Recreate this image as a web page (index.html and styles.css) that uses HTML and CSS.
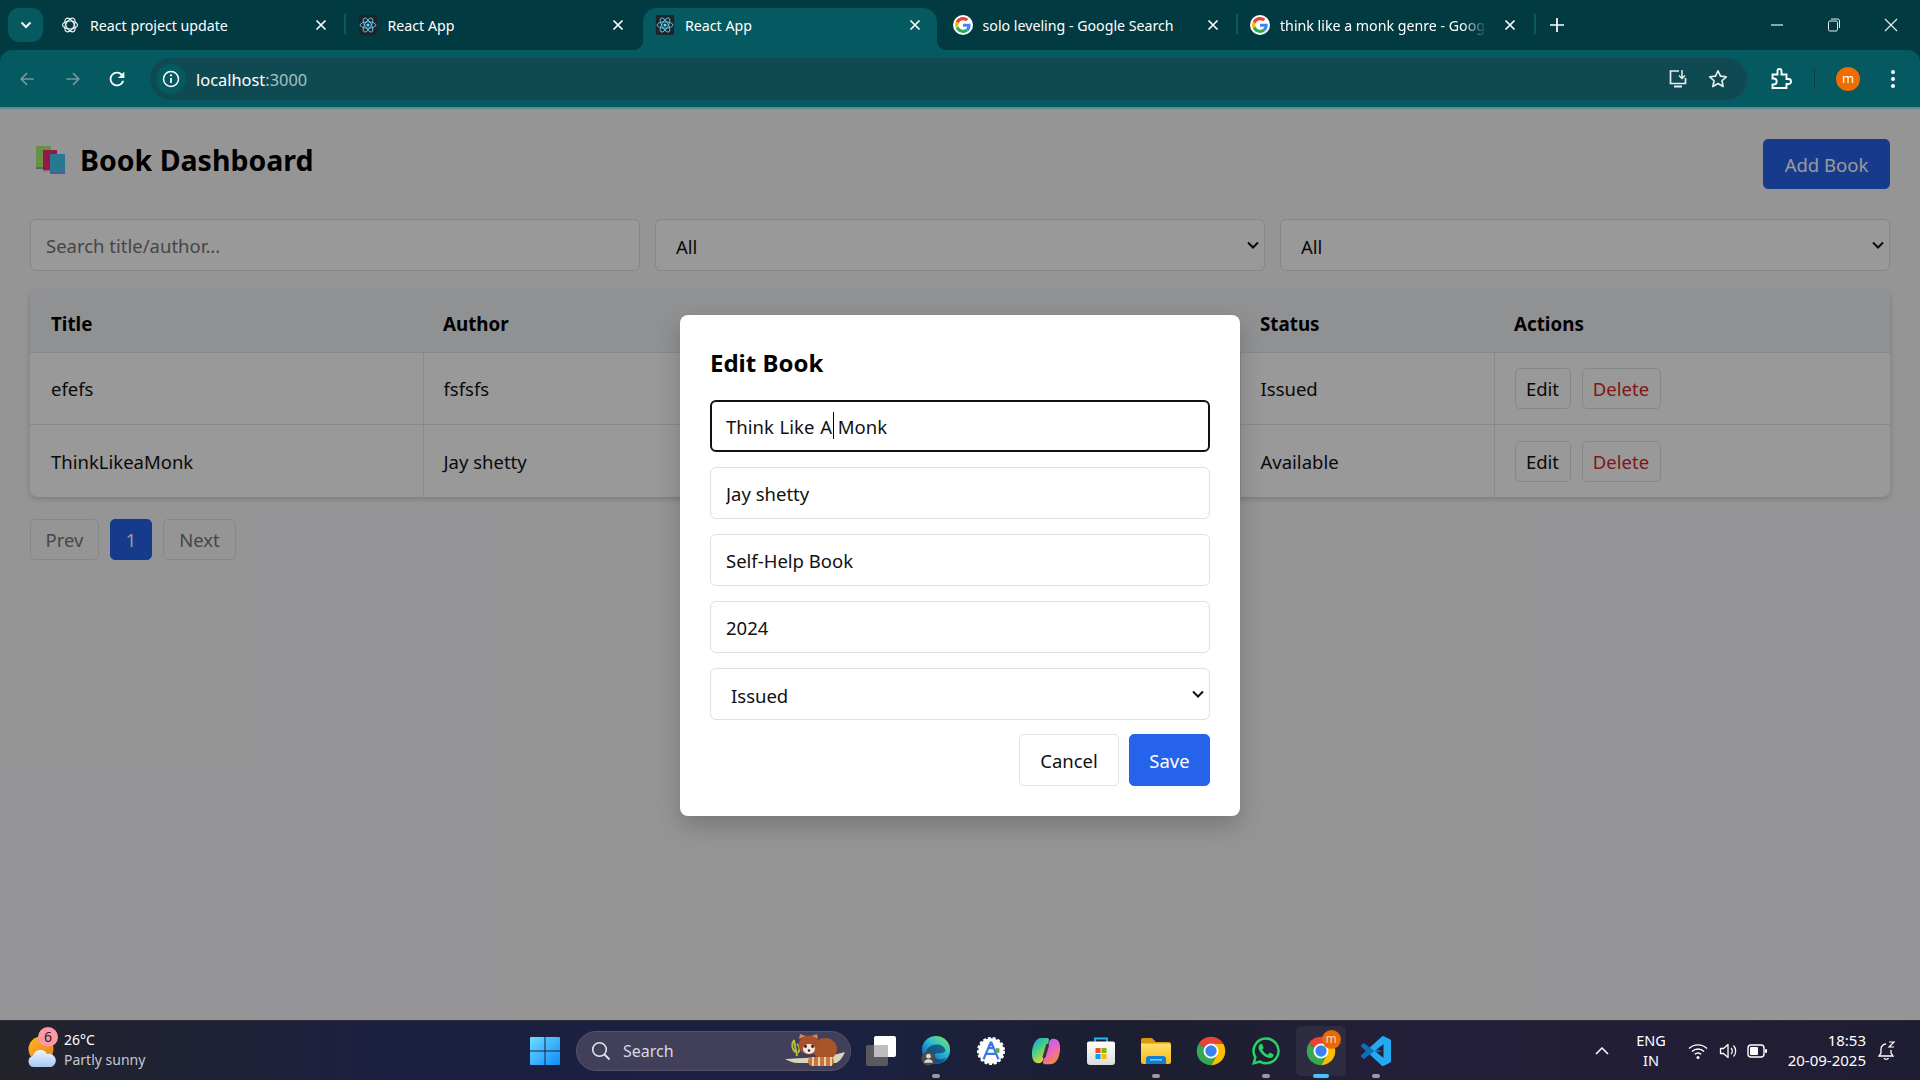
FILE: index.html
```html
<!DOCTYPE html>
<html lang="en">
<head>
<meta charset="utf-8">
<title>React App</title>
<link rel="stylesheet" href="styles.css">
</head>
<body>
<svg class="defs" width="0" height="0" aria-hidden="true">
  <defs>
    <linearGradient id="winG" x1="0" y1="0" x2="1" y2="1"><stop offset="0" stop-color="#6fdcff"/><stop offset="1" stop-color="#0c8dfb"/></linearGradient>
    <linearGradient id="edgeG" x1="0.9" y1="0.1" x2="0.2" y2="1"><stop offset="0" stop-color="#7bdc6a"/><stop offset=".35" stop-color="#2cc3cf"/><stop offset=".75" stop-color="#1478c8"/><stop offset="1" stop-color="#0c4f9c"/></linearGradient>
    <linearGradient id="copA" x1="0" y1="0" x2="0.6" y2="1"><stop offset="0" stop-color="#2b8cf0"/><stop offset=".45" stop-color="#38d08c"/><stop offset="1" stop-color="#f5d233"/></linearGradient>
    <linearGradient id="copB" x1="0" y1="0" x2="0.6" y2="1"><stop offset="0" stop-color="#9b6cf0"/><stop offset=".55" stop-color="#e864c8"/><stop offset="1" stop-color="#f58a3c"/></linearGradient>
    <linearGradient id="bagG" x1="0" y1="0" x2="0" y2="1"><stop offset="0" stop-color="#fff"/><stop offset="1" stop-color="#dcdcdc"/></linearGradient>
    <linearGradient id="folderG" x1="0" y1="0" x2="0" y2="1"><stop offset="0" stop-color="#ffe06a"/><stop offset="1" stop-color="#f6b81a"/></linearGradient>
    <linearGradient id="sunG" x1="0" y1="0" x2="1" y2="1"><stop offset="0" stop-color="#fbb82a"/><stop offset="1" stop-color="#ee7d18"/></linearGradient>
    <linearGradient id="cloudG" x1="0" y1="0" x2="0" y2="1"><stop offset="0" stop-color="#eef5ff"/><stop offset="1" stop-color="#a9c8f2"/></linearGradient>

    <symbol id="i-react" viewBox="0 0 24 24">
      <rect x="1" y="0" width="22" height="24" rx="2" fill="#20232a"/>
      <g fill="none" stroke="#61dafb" stroke-width="1">
        <ellipse cx="12" cy="12" rx="9.5" ry="3.8"/>
        <ellipse cx="12" cy="12" rx="9.5" ry="3.8" transform="rotate(60 12 12)"/>
        <ellipse cx="12" cy="12" rx="9.5" ry="3.8" transform="rotate(120 12 12)"/>
      </g>
      <circle cx="12" cy="12" r="1.9" fill="#61dafb"/>
    </symbol>
    <symbol id="i-gpt" viewBox="0 0 24 24">
      <g fill="none" stroke="#f2f5f5" stroke-width="1.5">
        <ellipse cx="12" cy="12" rx="10" ry="5.4"/>
        <ellipse cx="12" cy="12" rx="10" ry="5.4" transform="rotate(60 12 12)"/>
        <ellipse cx="12" cy="12" rx="10" ry="5.4" transform="rotate(120 12 12)"/>
      </g>
    </symbol>
    <symbol id="i-google" viewBox="-6 -6 60 60">
      <circle cx="24" cy="24" r="30" fill="#fff"/>
      <path fill="#EA4335" d="M24 9.5c3.54 0 6.71 1.22 9.21 3.6l6.85-6.85C35.9 2.38 30.47 0 24 0 14.62 0 6.51 5.38 2.56 13.22l7.98 6.19C12.43 13.72 17.74 9.5 24 9.5z"/>
      <path fill="#4285F4" d="M46.98 24.55c0-1.57-.15-3.09-.38-4.55H24v9.02h12.94c-.58 2.96-2.26 5.48-4.78 7.18l7.73 6c4.51-4.18 7.09-10.36 7.09-17.65z"/>
      <path fill="#FBBC05" d="M10.53 28.59c-.48-1.45-.76-2.99-.76-4.59s.27-3.14.76-4.59l-7.98-6.19C.92 16.46 0 20.12 0 24c0 3.88.92 7.54 2.56 10.78l7.97-6.19z"/>
      <path fill="#34A853" d="M24 48c6.48 0 11.93-2.13 15.89-5.81l-7.73-6c-2.15 1.45-4.92 2.3-8.16 2.3-6.26 0-11.57-4.22-13.47-9.91l-7.98 6.19C6.51 42.62 14.62 48 24 48z"/>
    </symbol>
    <symbol id="i-close" viewBox="0 0 12 12"><path d="M1.5 1.5l9 9M10.5 1.5l-9 9" stroke="#fff" stroke-width="1.7" fill="none"/></symbol>
    <symbol id="i-chrome" viewBox="3 3 42 42">
      <path fill="#ea4335" d="M24 4a20 20 0 0 1 17.32 10H24a10 10 0 0 0-8.66 5L6.68 14A20 20 0 0 1 24 4z"/>
      <path fill="#fbbc04" d="M41.32 14H24a10 10 0 0 1 8.66 15L24 44a20 20 0 0 0 17.32-30z"/>
      <path fill="#34a853" d="M6.68 14l8.66 5A10 10 0 0 0 32.66 29L24 44A20 20 0 0 1 6.68 14z"/>
      <circle cx="24" cy="24" r="10.5" fill="#fff"/><circle cx="24" cy="24" r="8" fill="#3b82f0"/>
    </symbol>
    <symbol id="i-vscode" viewBox="0 0 24 24">
      <path fill="#0f6fb5" d="M.33 7.26 1.65 6.06a1 1 0 0 1 1.28-.06l4.12 3.13L17 12l-10 2.87-4.07 3.13a1 1 0 0 1-1.28-.06L.33 16.74a1 1 0 0 1 0-1.48L3.9 12 .33 8.74a1 1 0 0 1 0-1.48z"/>
      <path fill="#23a9f2" d="M23.15 2.59 18.21.21a1.49 1.49 0 0 0-1.7.29l-9.46 8.63 3.78 2.87 7.17-5.45v10.9L10.83 12l-3.78 2.87 9.46 8.63a1.49 1.49 0 0 0 1.7.29l4.94-2.38A1.5 1.5 0 0 0 24 20.06V3.94a1.5 1.5 0 0 0-.85-1.35z"/>
    </symbol>
    <symbol id="i-whatsapp" viewBox="0 0 24 24">
      <path d="M12 2a9.9 9.9 0 0 0-8.5 15L2.2 21.8l5-1.3A9.9 9.9 0 1 0 12 2z" fill="none" stroke="#25d366" stroke-width="2"/>
      <path fill="#25d366" d="M17.47 14.38c-.3-.15-1.76-.87-2.03-.97-.27-.1-.47-.15-.67.15-.2.3-.77.97-.94 1.16-.17.2-.35.22-.64.08-.3-.15-1.26-.46-2.39-1.48-.88-.79-1.48-1.76-1.65-2.06-.17-.3-.02-.46.13-.6.13-.14.3-.35.45-.52.15-.18.2-.3.3-.5.1-.2.05-.37-.03-.52-.07-.15-.67-1.61-.91-2.2-.25-.58-.49-.5-.67-.51h-.57c-.2 0-.52.07-.8.37-.27.3-1.04 1.02-1.04 2.48s1.07 2.88 1.22 3.07c.15.2 2.1 3.2 5.08 4.49.71.3 1.26.49 1.7.62.71.23 1.36.2 1.87.12.57-.09 1.76-.72 2-1.41.25-.7.25-1.29.18-1.42-.08-.12-.28-.2-.57-.34z"/>
    </symbol>
    <symbol id="i-edge" viewBox="0 0 32 32">
      <circle cx="16" cy="15" r="15" fill="url(#edgeG)"/>
      <path d="M6 15c3-7 17-9 20 0 .5 2-2 3.5-8 3.5-4 0-5 2.500-2 5 3 2.500 8 2 11-.5-3 6-9 7-13 6C8 28 4 21 6 15z" fill="#14406f" opacity=".75"/>
      <circle cx="8" cy="24" r="7.500" fill="#4b4b4b"/>
      <circle cx="8" cy="21.500" r="2.600" fill="#d8d8d8"/>
      <path d="M3.200 28.500a5 5 0 0 1 9.600 0z" fill="#d8d8d8"/>
    </symbol>
    <symbol id="i-studio" viewBox="0 0 32 32">
      <circle cx="16" cy="16" r="13.500" fill="#fff" stroke="#fff" stroke-width="3" stroke-dasharray="3 2"/>
      <path d="M16 6 8 25M16 6l8 19M10.500 19h11M13 13h6" fill="none" stroke="#3b78e7" stroke-width="2.400"/>
      <circle cx="16" cy="9" r="2" fill="#3b78e7"/>
      <rect x="21" y="13" width="4" height="5" fill="#5aa85a"/>
    </symbol>
    <symbol id="i-copilot" viewBox="0 0 32 32">
      <path fill="url(#copA)" d="M11 2h6c2 0 2.500 1 2 3l-6 20c-.5 2-2 4-5 4-5 0-7-4-7-10C1 10 5 2 11 2z"/>
      <path fill="url(#copB)" d="M21 30h-6c-2 0-2.500-1-2-3l6-20c.5-2 2-4 5-4 5 0 7 4 7 10 0 9-4 17-10 17z"/>
      <path d="M17.500 10 14 22" stroke="#2a2238" stroke-width="3.500" stroke-linecap="round" opacity=".8"/>
    </symbol>
    <symbol id="i-store" viewBox="0 0 30 30">
      <path d="M9 7V2.500h12V7" fill="none" stroke="#27b6f0" stroke-width="1.800"/>
      <path d="M1 7.500a2 2 0 0 1 2-2h24a2 2 0 0 1 2 2V26a3 3 0 0 1-3 3H4a3 3 0 0 1-3-3z" fill="url(#bagG)"/>
      <rect x="9.500" y="12" width="5" height="5" fill="#f25022"/><rect x="15.500" y="12" width="5" height="5" fill="#7fba00"/>
      <rect x="9.500" y="18" width="5" height="5" fill="#00a4ef"/><rect x="15.500" y="18" width="5" height="5" fill="#ffb900"/>
    </symbol>
    <symbol id="i-files" viewBox="0 0 30 30">
      <path d="M0 4a2 2 0 0 1 2-2h8a3 3 0 0 1 2 1l3 3h13a2 2 0 0 1 2 2v4H0z" fill="#d99a12"/>
      <path d="M0 7.500h28a2 2 0 0 1 2 2V26a2 2 0 0 1-2 2H2a2 2 0 0 1-2-2z" fill="url(#folderG)"/>
      <path d="M5 28v-5a3 3 0 0 1 3-3h14a3 3 0 0 1 3 3v5z" fill="#0f7fd6"/>
      <rect x="9" y="23" width="12" height="1.600" fill="#7cc4f5"/>
    </symbol>
  </defs>
</svg>

<header class="tabstrip">
  <button class="tab-search" aria-label="Search tabs">
    <svg width="12" height="8" viewBox="0 0 12 8"><path d="M1.500 1.500 6 6l4.500-4.500" fill="none" stroke="#fff" stroke-width="2"/></svg>
  </button>
  <div class="tab tab-first">
    <svg class="fav" width="18" height="18"><use href="#i-gpt"/></svg>
    <span class="tab-title">React project update</span>
    <svg class="x" width="12" height="12"><use href="#i-close"/></svg>
  </div>
  <div class="tab tab-before-active">
    <svg class="fav fav-big" width="20" height="20"><use href="#i-react"/></svg>
    <span class="tab-title">React App</span>
    <svg class="x" width="12" height="12"><use href="#i-close"/></svg>
  </div>
  <div class="tab tab-active">
    <svg class="fav fav-big" width="20" height="20"><use href="#i-react"/></svg>
    <span class="tab-title">React App</span>
    <svg class="x" width="12" height="12"><use href="#i-close"/></svg>
  </div>
  <div class="tab tab-after-active">
    <svg class="fav fav-big" width="20" height="20"><use href="#i-google"/></svg>
    <span class="tab-title">solo leveling - Google Search</span>
    <svg class="x" width="12" height="12"><use href="#i-close"/></svg>
  </div>
  <div class="tab">
    <svg class="fav fav-big" width="20" height="20"><use href="#i-google"/></svg>
    <span class="tab-title tab-title-fade">think like a monk genre - Google Search</span>
    <svg class="x" width="12" height="12"><use href="#i-close"/></svg>
  </div>
  <svg class="plus" width="14" height="14" viewBox="0 0 14 14"><path d="M7 0v14M0 7h14" stroke="#fff" stroke-width="1.700"/></svg>
  <div class="win-controls">
    <svg width="14" height="14" viewBox="0 0 14 14"><path d="M1 7h12" stroke="#e8eeee" stroke-width="1.200"/></svg>
    <svg width="14" height="14" viewBox="0 0 14 14"><rect x="1.500" y="3" width="9" height="10" rx="1.500" fill="none" stroke="#e8eeee"/><path d="M4 1h6.500A2 2 0 0 1 12.500 3v7" fill="none" stroke="#e8eeee"/></svg>
    <svg width="14" height="14" viewBox="0 0 14 14"><path d="M1 1l12 12M13 1 1 13" stroke="#e8eeee" stroke-width="1.200"/></svg>
  </div>
</header>

<nav class="toolbar">
  <span class="tool tool-back"><svg width="20" height="20" viewBox="0 0 24 24"><path d="M20 12H5M12 5l-7 7 7 7" fill="none" stroke="#6f9a9d" stroke-width="2"/></svg></span>
  <span class="tool tool-forward"><svg width="20" height="20" viewBox="0 0 24 24"><path d="M4 12h15M12 5l7 7-7 7" fill="none" stroke="#6f9a9d" stroke-width="2"/></svg></span>
  <span class="tool"><svg width="22" height="22" viewBox="0 0 24 24"><path fill="#fff" d="M17.650 6.350A7.958 7.958 0 0 0 12 4c-4.420 0-7.990 3.580-7.990 8s3.570 8 7.990 8c3.730 0 6.840-2.550 7.730-6h-2.080A5.990 5.990 0 0 1 12 18c-3.310 0-6-2.690-6-6s2.690-6 6-6c1.660 0 3.140.690 4.220 1.780L13 11h7V4l-2.350 2.350z"/></svg></span>
  <div class="omnibox">
    <span class="info-chip"><svg width="18" height="18" viewBox="0 0 18 18"><circle cx="9" cy="9" r="7.500" fill="none" stroke="#fff" stroke-width="1.500"/><path d="M9 8v5" stroke="#fff" stroke-width="1.700"/><circle cx="9" cy="5.300" r="1.100" fill="#fff"/></svg></span>
    <span class="url">localhost<span class="url-port">:3000</span></span>
    <span class="omni-actions">
      <svg width="22" height="22" viewBox="0 0 22 22"><path d="M12 3H3.500v12.500h15V10" fill="none" stroke="#e6eeee" stroke-width="1.700"/><path d="M15 2v8M12 7.500l3 3 3-3" fill="none" stroke="#e6eeee" stroke-width="1.500"/><path d="M7 18.500h8" stroke="#e6eeee" stroke-width="2"/></svg>
      <svg width="22" height="22" viewBox="0 0 24 24"><path d="m12 3 2.700 5.900 6.300.7-4.700 4.300 1.300 6.300L12 17l-5.600 3.200 1.300-6.300L3 9.600l6.300-.7z" fill="none" stroke="#e6eeee" stroke-width="1.800" stroke-linejoin="round"/></svg>
    </span>
  </div>
  <span class="tool tool-ext"><svg width="24" height="24" viewBox="0 0 24 24"><path d="M20.500 12H18.500V7.500h-5V4a2 2 0 0 0-4 0v3.500H4.500v4h1.200a3 3 0 0 1 0 6H4.500v3.500h14V17h2a2.500 2.500 0 0 0 0-5z" fill="none" stroke="#fff" stroke-width="1.900"/></svg></span>
  <span class="toolbar-sep"></span>
  <span class="avatar">m</span>
  <span class="tool tool-menu"><svg width="6" height="20" viewBox="0 0 6 20"><circle cx="3" cy="3" r="2" fill="#fff"/><circle cx="3" cy="10" r="2" fill="#fff"/><circle cx="3" cy="17" r="2" fill="#fff"/></svg></span>
</nav>

<main class="page">
  <div class="page-head">
    <h1 class="page-title">
      <svg class="books" width="30" height="28" viewBox="0 0 30 28">
        <rect x="0" y="0" width="15" height="22" fill="#b0f070"/><rect x="0" y="21" width="15" height="2" fill="#8fa8b8"/>
        <rect x="7" y="4" width="14" height="21" fill="#f52a78"/><rect x="7" y="24" width="14" height="1.500" fill="#ffa8d0"/>
        <rect x="14" y="8" width="15" height="19" fill="#40c8f5"/><rect x="14" y="26" width="15" height="2" fill="#7ca0f0"/>
      </svg>
      Book Dashboard
    </h1>
    <button class="btn btn-primary btn-add">Add Book</button>
  </div>

  <div class="filters">
    <input class="control" type="text" placeholder="Search title/author...">
    <select class="control control-select"><option>All</option></select>
    <select class="control control-select"><option>All</option></select>
  </div>

  <div class="table-card">
    <table class="books-table">
      <colgroup>
        <col class="col-title"><col class="col-author"><col class="col-genre"><col class="col-year"><col class="col-status"><col class="col-actions">
      </colgroup>
      <thead>
        <tr><th>Title</th><th>Author</th><th>Genre</th><th>Year</th><th>Status</th><th>Actions</th></tr>
      </thead>
      <tbody>
        <tr>
          <td>efefs</td><td>fsfsfs</td><td>fsfs</td><td>2024</td><td>Issued</td>
          <td><div class="row-actions"><button class="btn btn-row btn-edit">Edit</button><button class="btn btn-row btn-delete">Delete</button></div></td>
        </tr>
        <tr>
          <td>ThinkLikeaMonk</td><td>Jay shetty</td><td>Self-Help Book</td><td>2024</td><td>Available</td>
          <td><div class="row-actions"><button class="btn btn-row btn-edit">Edit</button><button class="btn btn-row btn-delete">Delete</button></div></td>
        </tr>
      </tbody>
    </table>
  </div>

  <div class="pager">
    <button class="btn btn-row btn-muted btn-prev">Prev</button>
    <button class="btn btn-row btn-current">1</button>
    <button class="btn btn-row btn-muted btn-next">Next</button>
  </div>

  <div class="overlay">
    <form class="dialog">
      <h2 class="dialog-title">Edit Book</h2>
      <div class="field">
        <input class="control control-focus" type="text" value="Think Like A Monk">
        <span class="caret"></span>
      </div>
      <input class="control" type="text" value="Jay shetty">
      <input class="control" type="text" value="Self-Help Book">
      <input class="control" type="text" value="2024">
      <select class="control control-select"><option>Issued</option></select>
      <div class="dialog-actions">
        <button type="button" class="btn btn-cancel">Cancel</button>
        <button type="button" class="btn btn-primary btn-save">Save</button>
      </div>
    </form>
  </div>
</main>

<footer class="taskbar">
  <div class="weather">
    <span class="weather-icon">
      <svg width="30" height="34" viewBox="0 0 30 34">
        <circle cx="14" cy="13" r="12.500" fill="url(#sunG)"/>
        <path d="M7 31a5.500 5.500 0 0 1-1-10.900A7.500 7.500 0 0 1 20 18a6.500 6.500 0 0 1 4 13z" fill="url(#cloudG)"/>
      </svg>
      <span class="weather-badge">6</span>
    </span>
    <span class="weather-text"><span class="temp">26°C</span><span class="cond">Partly sunny</span></span>
  </div>

  <div class="task-center">
    <svg class="start" width="30" height="30" viewBox="0 0 30 30">
      <path fill="url(#winG)" d="M1 1h13.500v13.500H0V2a1 1 0 0 1 1-1zM15.500 1H29a1 1 0 0 1 1 1v12.500H15.500zM0 15.500h14.500V29H1a1 1 0 0 1-1-1zM15.500 15.500H30V28a1 1 0 0 1-1 1H15.500z"/>
    </svg>
    <div class="search-pill">
      <svg width="20" height="20" viewBox="0 0 20 20"><circle cx="8.500" cy="8.500" r="6.800" fill="none" stroke="#e4e4ea" stroke-width="1.600"/><path d="m13.500 13.500 5 5" stroke="#e4e4ea" stroke-width="1.800"/></svg>
      <span class="search-label">Search</span>
      <svg class="panda" width="62" height="38" viewBox="0 0 62 38">
        <path d="M1 28c15-1 40-1 60-7-2 5-5 9-9 11H14C9 32 5 30 1 28z" fill="#d9d4bd"/>
        <path d="M10 9l3 16M10 9c-3 4-2 9 1 12M13 13c3 2 3 6 1 9" stroke="#b8c23e" stroke-width="1.800" fill="none"/>
        <ellipse cx="41" cy="18" rx="12" ry="11" fill="#a9552a"/>
        <rect x="24" y="26" width="26" height="9" rx="4.500" fill="#c8743c"/>
        <path d="M29 26v9M35 26v9M41 26v9M47 26v9" stroke="#f0d8b8" stroke-width="1.800"/>
        <path d="M15 8l1-5 6 2zM34 8l-1-5-6 2z" fill="#c98a5e"/>
        <ellipse cx="25" cy="14" rx="10.500" ry="9.500" fill="#a8502a"/>
        <ellipse cx="25" cy="18" rx="6" ry="5" fill="#f0e6dc"/>
        <circle cx="21.500" cy="15.500" r="1.400" fill="#2a2020"/><circle cx="28.500" cy="15.500" r="1.400" fill="#2a2020"/><circle cx="25" cy="19.500" r="1.200" fill="#2a2020"/>
      </svg>
    </div>
    <span class="task-view">
      <svg width="30" height="30" viewBox="0 0 30 30">
        <rect x="0" y="9" width="22" height="21" rx="2" fill="#5a5a5e"/>
        <rect x="8" y="0" width="22" height="21" rx="2" fill="#fff"/>
        <rect x="8" y="9" width="14" height="12" fill="#bdbdc0"/>
      </svg>
    </span>
    <div class="app-row">
      <span class="app app-on"><svg width="30" height="30"><use href="#i-edge"/></svg></span>
      <span class="app"><svg width="30" height="30"><use href="#i-studio"/></svg></span>
      <span class="app"><svg width="30" height="30"><use href="#i-copilot"/></svg></span>
      <span class="app"><svg width="30" height="30"><use href="#i-store"/></svg></span>
      <span class="app app-on"><svg width="30" height="30"><use href="#i-files"/></svg></span>
      <span class="app"><svg width="30" height="30"><use href="#i-chrome"/></svg></span>
      <span class="app app-on"><svg width="30" height="30"><use href="#i-whatsapp"/></svg></span>
      <span class="app app-active"><svg width="30" height="30"><use href="#i-chrome"/></svg><span class="app-badge">m</span></span>
      <span class="app app-on"><svg width="30" height="30"><use href="#i-vscode"/></svg></span>
    </div>
  </div>

  <div class="tray">
    <svg class="tray-caret" width="14" height="8" viewBox="0 0 14 8"><path d="M1 7l6-6 6 6" fill="none" stroke="#fff" stroke-width="1.500"/></svg>
    <span class="lang">ENG<br>IN</span>
    <svg class="tray-wifi" width="20" height="18" viewBox="0 0 20 18"><path d="M1 6.500a13 13 0 0 1 18 0M4 9.500a8.500 8.500 0 0 1 12 0M6.800 12.300a4.500 4.500 0 0 1 6.400 0" fill="none" stroke="#fff" stroke-width="1.400"/><circle cx="10" cy="15.500" r="1.500" fill="#fff"/></svg>
    <svg class="tray-vol" width="20" height="18" viewBox="0 0 20 18"><path d="M1.500 6.500h3L9 2.500v13l-4.500-4h-3z" fill="none" stroke="#fff" stroke-width="1.300" stroke-linejoin="round"/><path d="M12 6a4 4 0 0 1 0 6M14.500 3.500a8 8 0 0 1 0 11" fill="none" stroke="#fff" stroke-width="1.200"/></svg>
    <svg class="tray-bat" width="20" height="14" viewBox="0 0 20 14"><rect x="1" y="1" width="16" height="12" rx="3" fill="none" stroke="#fff" stroke-width="1.400"/><rect x="3" y="3" width="8" height="8" rx="1" fill="#fff"/><rect x="18" y="5" width="2" height="4" rx="1" fill="#fff"/></svg>
    <span class="clock">18:53<br>20-09-2025</span>
    <svg class="tray-bell" width="18" height="20" viewBox="0 0 18 20"><path d="M8 3a5 5 0 0 0-5 5v4l-2 3h14l-2-3V9" fill="none" stroke="#fff" stroke-width="1.300"/><path d="M6 17a2.500 2.500 0 0 0 4.500 0" fill="none" stroke="#fff" stroke-width="1.300"/><path d="M11 1h5l-5 5h5" fill="none" stroke="#fff" stroke-width="1.200"/></svg>
  </div>
</footer>
</body>
</html>
```
FILE: styles.css
```css
* { box-sizing: border-box; }
html, body { margin: 0; height: 100%; }
body {
  width: 1920px;
  height: 1080px;
  overflow: hidden;
  display: flex;
  flex-direction: column;
  font-family: "Noto Sans", "Open Sans", sans-serif;
  color: #111;
  background: #023a42;
}
.defs { position: absolute; }

/* Browser tab strip */
.tabstrip {
  flex: 0 0 50px;
  display: flex;
  align-items: stretch;
  padding: 8px 0 0 8px;
  background: #023a42;
  color: #fff;
}
.tab-search {
  flex: 0 0 35px;
  height: 34px;
  padding: 0;
  border: 0;
  border-radius: 11px;
  background: #05595f;
  display: flex;
  align-items: center;
  justify-content: center;
}
.tab {
  flex: 0 0 297.5px;
  height: 42px;
  position: relative;
  display: flex;
  align-items: center;
  padding: 0 0 8px 0;
  font-size: 14.200px;
  white-space: nowrap;
}
.tab-first { margin-left: 5px; }
.tab-first .tab-title { margin-left: -1px; width: 223px; }
.tab::after {
  content: "";
  position: absolute;
  right: 0;
  top: 6px;
  width: 2px;
  height: 20px;
  background: #0a5a62;
}
.tab-before-active::after { content: none; }
.tab-active {
  flex-basis: 294px;
  margin-right: 3.500px;
  background: #045a60;
  border-radius: 14px 14px 0 0;
}
.tab-active::after { content: none; }
.tab-active::before {
  content: "";
  position: absolute;
  left: -10px;
  bottom: 0;
  width: 10px;
  height: 10px;
  background: radial-gradient(circle at 0 0, transparent 10px, #045a60 10.500px);
}
.tab-after-active::before {
  content: "";
  position: absolute;
  left: -3.500px;
  bottom: 0;
  width: 10px;
  height: 10px;
  background: radial-gradient(circle at 100% 0, transparent 10px, #045a60 10.500px);
}
.fav { flex: none; margin-left: 13px; margin-right: 12px; }
.fav-big { margin-left: 12px; margin-right: 10px; }
.tab-title { flex: 0 0 auto; width: 222px; overflow: hidden; }
.tab-title-fade {
  width: 207px;
  margin-right: 15px;
  -webkit-mask-image: linear-gradient(90deg, #000 88%, transparent);
  mask-image: linear-gradient(90deg, #000 88%, transparent);
}
.x { flex: none; margin-left: 2px; }
.plus { align-self: flex-start; margin: 10px 0 0 14px; }
.win-controls {
  margin-left: auto;
  width: 150px;
  display: flex;
  justify-content: space-between;
  align-items: flex-start;
  padding: 10px 22px 0 0;
}

/* Browser toolbar */
.toolbar {
  flex: 0 0 59px;
  display: flex;
  align-items: center;
  padding: 1px 0 0 5px;
  background: #045a60;
  border-radius: 12px 12px 0 0;
  border-bottom: 2px solid #5f8d8f;
}
.tool { flex: 0 0 44px; display: flex; align-items: center; justify-content: center; height: 40px; }
.tool-forward { margin-left: 2px; }
.omnibox {
  flex: 0 0 1597px;
  height: 42px;
  margin-left: 11px;
  padding-left: 6px;
  display: flex;
  align-items: center;
  border-radius: 21px;
  background: #0f4a52;
}
.info-chip {
  flex: 0 0 30px;
  height: 30px;
  border-radius: 50%;
  background: #055a60;
  display: flex;
  align-items: center;
  justify-content: center;
}
.url { margin-left: 10px; font-size: 16.400px; color: #fff; }
.url-port { color: #a8c0c2; }
.omni-actions {
  margin-left: auto;
  margin-right: 18px;
  display: flex;
  gap: 18px;
}
.tool-ext { margin-left: 11px; }
.toolbar-sep { flex: 0 0 1px; height: 20px; margin-left: 12px; background: #0a3f46; }
.avatar {
  flex: 0 0 24px;
  height: 24px;
  margin-left: 21px;
  border-radius: 50%;
  background: #ef6c00;
  color: #fff;
  font-size: 13px;
  line-height: 22px;
  text-align: center;
}
.tool-menu { flex-basis: 36px; margin-left: 15px; }

/* Page */
.page {
  flex: 1 1 auto;
  position: relative;
  padding: 30px;
  font-size: 18.500px;
  color: #111;
  background: #f8f9fb;
}
.page-head {
  display: flex;
  justify-content: space-between;
  align-items: flex-start;
  margin-bottom: 30px;
}
.page-title {
  margin: 0;
  display: flex;
  align-items: center;
  gap: 14px;
  font-size: 28.500px;
  font-weight: 700;
  line-height: 42px;
  padding-left: 6px;
  color: #000;
}
.books { flex: none; }
.btn {
  font: inherit;
  font-size: 18.500px;
  border: 1px solid #e2e2e2;
  border-radius: 5px;
  background: #fff;
  color: #111;
  padding: 0;
  text-align: center;
}
.btn-primary { background: #2563eb; border-color: #2563eb; color: #fff; }
.btn-add { width: 127px; height: 50px; }

.filters {
  display: grid;
  grid-template-columns: repeat(3, minmax(0, 1fr));
  gap: 15px;
  margin-bottom: 19px;
}

.control {
  display: block;
  width: 100%;
  height: 52px;
  padding: 0 15px;
  border: 1px solid #e0e0e0;
  border-radius: 6px;
  background-color: #fff;
  font: inherit;
  font-size: 18.500px;
  color: #111;
  outline: none;
}
.control::placeholder { color: #757575; }
.control-select {
  appearance: none;
  -webkit-appearance: none;
  padding: 2px 30px 0 20px;
  background-image: url("data:image/svg+xml,%3Csvg xmlns='http://www.w3.org/2000/svg' width='12' height='8' viewBox='0 0 12 8'%3E%3Cpath d='M1 1.500l5 5 5-5' fill='none' stroke='%23111' stroke-width='2'/%3E%3C/svg%3E");
  background-repeat: no-repeat;
  background-position: right 5px top 21px;
}

/* Table */
.table-card {
  border-radius: 8px;
  overflow: hidden;
  box-shadow: 0 2px 6px rgba(0, 0, 0, .18);
  background: #fff;
}
.books-table { width: 100%; table-layout: fixed; border-collapse: collapse; }
.col-title { width: 393px; }
.col-author { width: 330px; }
.col-genre { width: 300px; }
.col-year { width: 187px; }
.col-status { width: 254px; }
.col-actions { width: auto; }
.books-table th, .books-table td {
  text-align: left;
  padding: 15px 20px;
  vertical-align: middle;
}
.books-table th:first-child, .books-table td:first-child { padding-left: 21px; }
.books-table th {
  height: 62px;
  padding-top: 18px;
  padding-bottom: 12px;
  background: #f1f2f5;
  font-weight: 700;
  color: #000;
  font-size: 18.800px;
}
.books-table td {
  height: 72.500px;
  border-top: 1px solid #e3e4e8;
  border-right: 1px solid #e3e4e8;
}
.books-table td:last-child { border-right: 0; }
.row-actions { display: flex; gap: 11px; }
.btn-row { height: 41px; }
.btn-edit { width: 56px; }
.btn-delete { width: 79px; color: #dc2626; }

.pager { display: flex; gap: 11px; margin-top: 22px; }
.btn-prev { width: 69px; }
.btn-next { width: 73px; }
.btn-muted { color: #777; background: #f8f9fb; }
.btn-current { width: 42px; background: #2563eb; border-color: #2563eb; color: #fff; }

/* Modal */
.overlay {
  position: absolute;
  inset: 0;
  padding-top: 2px;
  background: rgba(0, 0, 0, .4);
  display: flex;
  align-items: center;
  justify-content: center;
}
.dialog {
  width: 560px;
  height: 501px;
  padding: 30px;
  border-radius: 8px;
  background: #fff;
  box-shadow: 0 10px 25px rgba(0, 0, 0, .2);
  display: flex;
  flex-direction: column;
  gap: 15px;
}
.dialog-title {
  margin: 0 0 4px;
  font-size: 24px;
  line-height: 36px;
  font-weight: 700;
  color: #000;
}
.field { position: relative; }
.control-focus { border: 2px solid #111; padding: 0 14px; word-spacing: 1px; }
.caret {
  position: absolute;
  left: 123px;
  top: 12px;
  width: 1px;
  height: 27px;
  background: #000;
}
.dialog-actions { display: flex; justify-content: flex-end; gap: 10px; margin-top: -1px; }
.btn-cancel { width: 100px; height: 52px; }
.btn-save { width: 81px; height: 52px; }

/* Windows taskbar */
.taskbar {
  flex: 0 0 60px;
  display: flex;
  align-items: center;
  border-top: 1px solid #2c2c36;
  background: linear-gradient(90deg, #22232b 0%, #1c2040 20%, #1b2140 45%, #1c1e30 60%, #241f3a 75%, #1f1d33 100%);
  color: #fff;
}
.weather { flex: 0 0 530px; display: flex; align-items: center; padding-left: 27px; }
.weather-icon { position: relative; width: 30px; height: 34px; display: block; margin-top: 4px; }
.weather-badge {
  position: absolute;
  left: 11px;
  top: -9px;
  width: 20px;
  height: 20px;
  border-radius: 50%;
  background: #ff98a4;
  color: #222;
  font-size: 14px;
  line-height: 20px;
  text-align: center;
}
.weather-text { display: flex; flex-direction: column; margin: -2px 0 0 7px; font-size: 14px; line-height: 20px; }
.cond { color: #c8c8d0; }

.task-center { display: flex; align-items: center; }
.start { flex: none; }
.search-pill {
  flex: 0 0 275px;
  height: 40px;
  margin-left: 16px;
  padding-left: 14px;
  display: flex;
  align-items: center;
  border-radius: 20px;
  border: 1px solid #55526c;
  background: #423f5b;
  color: #d8d8e2;
  font-size: 16px;
}
.search-label { margin-left: 12px; }
.panda { margin-left: auto; margin-right: 4px; margin-top: -2px; }
.task-view { margin-left: 15px; width: 30px; height: 30px; display: block; }
.task-view svg { display: block; }
.app-row { display: flex; margin-left: 12px; }
.app {
  flex: 0 0 55px;
  height: 50px;
  display: flex;
  align-items: center;
  justify-content: center;
  position: relative;
}
.app-on::after, .app-active::after {
  content: "";
  position: absolute;
  left: 50%;
  bottom: -2px;
  width: 8px;
  height: 4px;
  margin-left: -4px;
  border-radius: 2px;
  background: #9a9aa4;
}
.app-active { border-radius: 5px; background: rgba(255, 255, 255, .06); flex-basis: 50px; margin: 0 2.500px; }
.app-active::after { width: 16px; margin-left: -8px; background: #4cc2ff; }
.app-badge {
  position: absolute;
  left: 26px;
  top: 4px;
  width: 19px;
  height: 19px;
  border-radius: 50%;
  background: #e86a00;
  color: #ffd8b8;
  font-size: 12px;
  line-height: 17px;
  text-align: center;
}

.tray { margin-left: auto; display: flex; align-items: center; font-size: 14.500px; line-height: 20px; color: #fff; }
.lang { text-align: center; width: 40px; margin: -2px 0 0 22px; }
.tray-caret { flex: none; }
.tray-wifi { margin-left: 17px; }
.tray-vol { margin-left: 10.500px; }
.tray-bat { margin-left: 8.500px; }
.clock { text-align: right; margin: -2px 0 0 9px; width: 90px; font-size: 15px; }
.tray-bell { margin: 0 24px 0 12px; }
```
